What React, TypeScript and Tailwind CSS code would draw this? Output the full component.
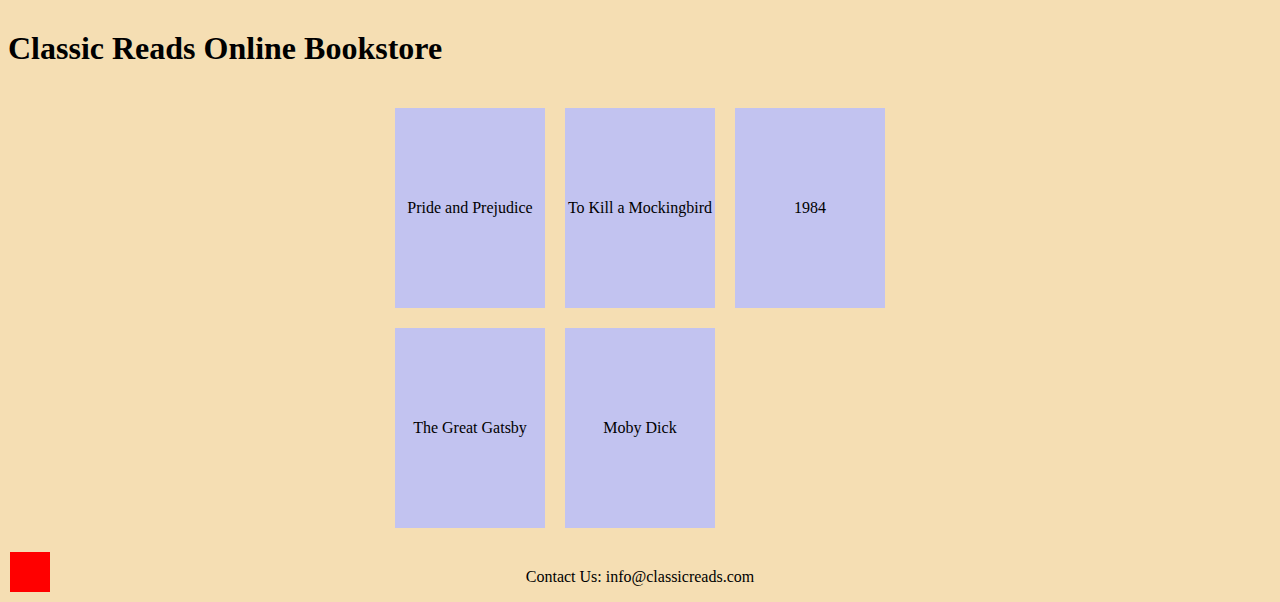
const books = [
    "Pride and Prejudice",
    "To Kill a Mockingbird",
    "1984",
    "The Great Gatsby",
    "Moby Dick",
];

export default function App() {
    return (
        <div className="min-h-[602px] bg-[#f5deb3] text-black font-['Liberation_Serif',serif] px-2 pt-[9px]">
            <h1 className="mt-[21px] mb-[21px] text-[32px] font-bold leading-[37px]">
                Classic Reads Online Bookstore
            </h1>
            <div className="mt-[41px] grid grid-cols-[repeat(3,150px)] justify-center gap-5">
                {books.map((title) => (
                    <div
                        key={title}
                        className="flex h-[200px] w-[150px] items-center justify-center bg-[#c2c3f0] text-center text-base"
                    >
                        {title}
                    </div>
                ))}
            </div>
            <footer className="mt-10 pb-4 text-center text-base leading-[18px]">
                Contact Us: info@classicreads.com
            </footer>
            <div className="fixed bottom-[10px] left-[10px] h-10 w-10 bg-[#ff0000]" />
        </div>
    );
}
